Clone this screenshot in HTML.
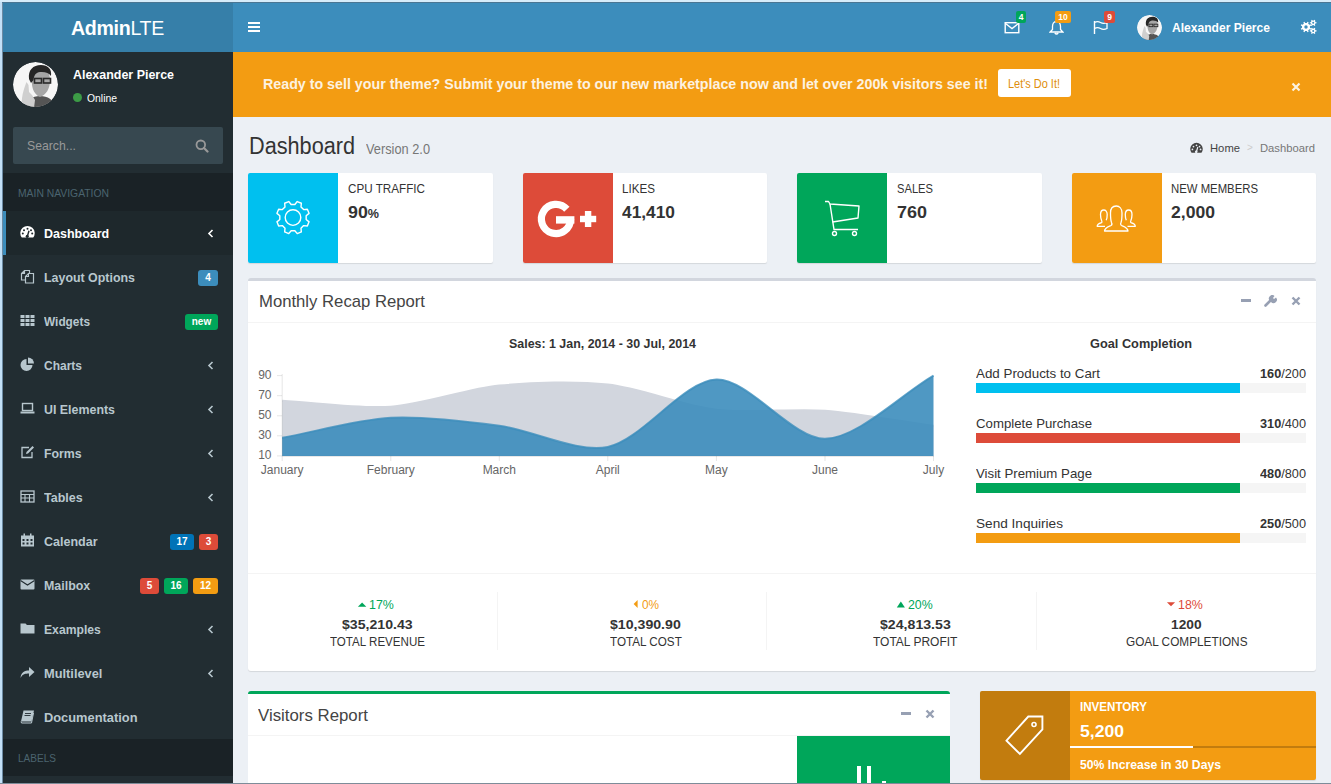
<!DOCTYPE html>
<html><head><meta charset="utf-8">
<style>
*{box-sizing:border-box;margin:0;padding:0}
html,body{width:1331px;height:784px;overflow:hidden}
body{position:relative;background:#ecf0f5;font-family:"Liberation Sans",sans-serif;color:#333;font-size:13px}
.a{position:absolute}
.t{position:absolute;white-space:nowrap;line-height:1;transform-origin:0 0}
.frameL{left:0;top:0;width:2px;height:784px;background:#c3e0f7}
.frameL2{left:2px;top:0;width:1px;height:784px;background:#6c8aa3}
.frameT{left:0;top:0;width:1331px;height:2px;background:#d6ecfa}
.frameT2{left:2px;top:2px;width:1329px;height:1px;background:#4a7693}
.frameB{left:0;top:783px;width:1331px;height:1px;background:#7d8c99}
.logo{left:3px;top:2px;width:230px;height:50px;background:#367fa9}
.navbar{left:233px;top:2px;width:1098px;height:50px;background:#3c8dbc}
.sidebar{left:3px;top:52px;width:230px;height:731px;background:#222d32}
.badge{position:absolute;height:12px;border-radius:2px;color:#fff;font-weight:bold;font-size:8.5px;line-height:12px;text-align:center;padding:0 2px}
.menu{position:absolute;left:3px;width:230px;height:44px;color:#b8c7ce}
.menu .lbl{position:absolute;left:41px;top:15px;font-size:13px;font-weight:bold;letter-spacing:0.1px;line-height:14px}
.menu .ic{position:absolute;left:17px;top:15px;width:14px;height:14px}
.menu .arr{position:absolute;left:204px;top:16px;width:8px;height:12px}
.lab{position:absolute;height:16px;border-radius:3px;color:#fff;font-weight:bold;font-size:10px;line-height:16px;text-align:center;top:14px}
</style></head><body>
<!-- HEADER -->
<div class="a logo"></div>
<div class="t" style="left:71px;top:18px;font-size:20px;color:#fff;letter-spacing:-0.3px;transform:scaleX(0.9788)"><b>Admin</b>LTE</div>
<div class="a navbar"></div>
<!-- hamburger -->
<div class="a" style="left:248px;top:22px;width:12px;height:2px;background:#fff"></div>
<div class="a" style="left:248px;top:26px;width:12px;height:2px;background:#fff"></div>
<div class="a" style="left:248px;top:30px;width:12px;height:2px;background:#fff"></div>
<!-- envelope -->
<svg class="a" style="left:1004px;top:21px" width="16" height="13" viewBox="0 0 16 13"><rect x="1.2" y="1.7" width="13.6" height="10" fill="none" stroke="#fff" stroke-width="1.4"/><path d="M1.2 2.2 L8 7.5 L14.8 2.2" fill="none" stroke="#fff" stroke-width="1.4"/></svg>
<div class="badge" style="left:1016px;top:11px;width:10px;background:#00a65a">4</div>
<!-- bell -->
<svg class="a" style="left:1049px;top:20px" width="15" height="15" viewBox="0 0 15 15"><path d="M7.5 1.5 C4.5 1.5 3.5 4 3.5 6.5 L3.5 9.5 L1.2 12 L13.8 12 L11.5 9.5 L11.5 6.5 C11.5 4 10.5 1.5 7.5 1.5 Z" fill="none" stroke="#fff" stroke-width="1.3"/><path d="M5.8 13 Q7.5 15 9.2 13" fill="none" stroke="#fff" stroke-width="1.4"/></svg>
<div class="badge" style="left:1055px;top:11px;width:16px;background:#f39c12">10</div>
<!-- flag -->
<svg class="a" style="left:1093px;top:20px" width="16" height="15" viewBox="0 0 16 15"><path d="M1.5 1 L1.5 14" stroke="#fff" stroke-width="1.4"/><path d="M1.5 2.5 Q4.5 0.8 7.5 2.5 Q10.5 4.2 14 2.5 L14 8.5 Q10.5 10.2 7.5 8.5 Q4.5 6.8 1.5 8.5" fill="none" stroke="#fff" stroke-width="1.3"/></svg>
<div class="badge" style="left:1104px;top:11px;width:11px;background:#dd4b39">9</div>
<!-- user -->
<svg class="a" style="left:1137px;top:15px" width="25" height="25" viewBox="0 0 45 45"><defs><clipPath id="avc2"><circle cx="22.5" cy="22.5" r="22.5"/></clipPath></defs><g clip-path="url(#avc2)"><circle cx="22.5" cy="22.5" r="22.5" fill="#f6f6f6"/>
<path d="M12 46 C13 38 19 34 27 34 C35 34 41 38 43 46 Z" fill="#555"/>
<path d="M19 14 C18 24 20 32 27 35 C33 33 37 27 37 18 C37 10 33 6 27 6 C22 6 19 9 19 14 Z" fill="#a6a6a6"/>
<path d="M16 17 C15 8 20 3 28 3 C35 3 39 7 38 14 C36 11 32 9.5 27 10 C23 10.5 21 13 20.5 18 L18 21 Z" fill="#262626"/>
<rect x="21.5" y="16.5" width="7" height="4.5" fill="none" stroke="#2a2a2a" stroke-width="1.6"/><rect x="30.5" y="16.5" width="7" height="4.5" fill="none" stroke="#2a2a2a" stroke-width="1.6"/>
<path d="M9 45 C8 37 10 30 12 24 L13.5 20 L15.5 23 L16 30 L19 33 L22 38 L21 46 Z" fill="#cfcfcf"/></g></svg>
<div class="t" style="left:1172px;top:21px;font-size:13px;color:#fff;font-weight:bold;transform:scaleX(0.9288)">Alexander Pierce</div>
<!-- gears -->
<svg class="a" style="left:1300px;top:19px" width="17" height="16" viewBox="0 0 17 16"><path d="M10.00 8.00 L9.90 8.87 L11.20 9.47 L10.71 10.64 L9.38 10.14 L8.83 10.83 L8.14 11.38 L8.64 12.71 L7.47 13.20 L6.87 11.90 L6.00 12.00 L5.13 11.90 L4.53 13.20 L3.36 12.71 L3.86 11.38 L3.17 10.83 L2.62 10.14 L1.29 10.64 L0.80 9.47 L2.10 8.87 L2.00 8.00 L2.10 7.13 L0.80 6.53 L1.29 5.36 L2.62 5.86 L3.17 5.17 L3.86 4.62 L3.36 3.29 L4.53 2.80 L5.13 4.10 L6.00 4.00 L6.87 4.10 L7.47 2.80 L8.64 3.29 L8.14 4.62 L8.83 5.17 L9.38 5.86 L10.71 5.36 L11.20 6.53 L9.90 7.13 Z M7.70 8.00 A1.7 1.7 0 1 0 4.30 8.00 A1.7 1.7 0 1 0 7.70 8.00 Z M15.28 2.60 L15.54 3.25 L16.56 3.27 L16.56 4.33 L15.54 4.35 L15.28 5.00 L14.84 5.55 L15.34 6.44 L14.42 6.97 L13.89 6.10 L13.20 6.20 L12.51 6.10 L11.98 6.97 L11.06 6.44 L11.56 5.55 L11.12 5.00 L10.86 4.35 L9.84 4.33 L9.84 3.27 L10.86 3.25 L11.12 2.60 L11.56 2.05 L11.06 1.16 L11.98 0.63 L12.51 1.50 L13.20 1.40 L13.89 1.50 L14.42 0.63 L15.34 1.16 L14.84 2.05 Z M14.20 3.80 A1.0 1.0 0 1 0 12.20 3.80 A1.0 1.0 0 1 0 14.20 3.80 Z M15.28 10.70 L15.54 11.35 L16.56 11.37 L16.56 12.43 L15.54 12.45 L15.28 13.10 L14.84 13.65 L15.34 14.54 L14.42 15.07 L13.89 14.20 L13.20 14.30 L12.51 14.20 L11.98 15.07 L11.06 14.54 L11.56 13.65 L11.12 13.10 L10.86 12.45 L9.84 12.43 L9.84 11.37 L10.86 11.35 L11.12 10.70 L11.56 10.15 L11.06 9.26 L11.98 8.73 L12.51 9.60 L13.20 9.50 L13.89 9.60 L14.42 8.73 L15.34 9.26 L14.84 10.15 Z M14.20 11.90 A1.0 1.0 0 1 0 12.20 11.90 A1.0 1.0 0 1 0 14.20 11.90 Z" fill="#fff" fill-rule="evenodd"/></svg>

<!-- SIDEBAR -->
<div class="a sidebar"></div>
<svg class="a" style="left:13px;top:62px" width="45" height="45" viewBox="0 0 45 45"><defs><clipPath id="avc"><circle cx="22.5" cy="22.5" r="22.5"/></clipPath></defs><g clip-path="url(#avc)"><circle cx="22.5" cy="22.5" r="22.5" fill="#f6f6f6"/>
<path d="M12 46 C13 38 19 34 27 34 C35 34 41 38 43 46 Z" fill="#555"/>
<path d="M19 14 C18 24 20 32 27 35 C33 33 37 27 37 18 C37 10 33 6 27 6 C22 6 19 9 19 14 Z" fill="#a6a6a6"/>
<path d="M16 17 C15 8 20 3 28 3 C35 3 39 7 38 14 C36 11 32 9.5 27 10 C23 10.5 21 13 20.5 18 L18 21 Z" fill="#262626"/>
<rect x="21.5" y="16.5" width="7" height="4.5" fill="none" stroke="#2a2a2a" stroke-width="1.6"/><rect x="30.5" y="16.5" width="7" height="4.5" fill="none" stroke="#2a2a2a" stroke-width="1.6"/>
<path d="M9 45 C8 37 10 30 12 24 L13.5 20 L15.5 23 L16 30 L19 33 L22 38 L21 46 Z" fill="#cfcfcf"/></g></svg>
<div class="t" style="left:73px;top:67.5px;font-size:13px;color:#fff;font-weight:bold;transform:scaleX(0.9572)">Alexander Pierce</div>
<div class="a" style="left:73px;top:93px;width:9px;height:9px;border-radius:50%;background:#3c9b46"></div>
<div class="t" style="left:87px;top:93px;font-size:11px;color:#fff;transform:scaleX(0.9435)">Online</div>
<!-- search -->
<div class="a" style="left:13px;top:127px;width:210px;height:37px;background:#374850;border-radius:2px"></div>
<div class="t" style="left:27px;top:139px;font-size:13px;color:#999;transform:scaleX(0.9417)">Search...</div>
<svg class="a" style="left:195px;top:139px" width="14" height="14" viewBox="0 0 14 14"><circle cx="5.8" cy="5.8" r="4.3" fill="none" stroke="#999" stroke-width="1.8"/><path d="M9 9 L12.5 12.5" stroke="#999" stroke-width="2.2" stroke-linecap="round"/></svg>
<!-- header -->
<div class="a" style="left:3px;top:173px;width:230px;height:38px;background:#1a2226"></div>
<div class="t" style="left:18px;top:188px;font-size:11.5px;color:#4b646f;transform:scaleX(0.8995)">MAIN NAVIGATION</div>

<div class="a" style="left:3px;top:211px;width:230px;height:44px;background:#1e282c"></div>
<div class="a" style="left:3px;top:211px;width:3px;height:44px;background:#3c8dbc"></div>
<svg class="a" style="left:20px;top:225px" width="15" height="15" viewBox="0 0 15 15"><path d="M1.8 12.5 A7.2 7.2 0 1 1 13.2 12.5 Z" fill="#fff"/><circle cx="7.5" cy="3.8" r="1" fill="#1e282c"/><circle cx="4" cy="5.3" r="1" fill="#1e282c"/><circle cx="11" cy="5.3" r="1" fill="#1e282c"/><circle cx="2.8" cy="8.6" r="1" fill="#1e282c"/><circle cx="12.2" cy="8.6" r="1" fill="#1e282c"/><path d="M7 12.5 L9 5.8" stroke="#1e282c" stroke-width="1.4"/><circle cx="7.2" cy="11.3" r="1.5" fill="#1e282c"/></svg>
<div class="t" style="left:44px;top:227px;font-size:13px;font-weight:bold;color:#fff;transform:scaleX(0.9601)">Dashboard</div>
<svg class="a" style="left:207px;top:229px" width="7" height="9" viewBox="0 0 7 9"><path d="M5.5 1 L2 4.5 L5.5 8" fill="none" stroke="#fff" stroke-width="1.6"/></svg>
<svg class="a" style="left:20px;top:269px" width="15" height="15" viewBox="0 0 15 15"><path d="M1.5 4.5 L4.5 1.5 L9.5 1.5 L9.5 11 L1.5 11 Z M1.5 4.5 L4.5 4.5 L4.5 1.5" fill="none" stroke="#b8c7ce" stroke-width="1.2"/><path d="M5.5 7.5 L8.5 4.5 L13.5 4.5 L13.5 14 L5.5 14 Z" fill="#222d32" stroke="#b8c7ce" stroke-width="1.2"/><path d="M5.5 7.5 L8.5 7.5 L8.5 4.5" fill="none" stroke="#b8c7ce" stroke-width="1.1"/></svg>
<div class="t" style="left:44px;top:271px;font-size:13px;font-weight:bold;color:#b8c7ce;transform:scaleX(0.9544)">Layout Options</div>
<div class="lab" style="left:198px;top:270px;width:20px;background:#3c8dbc">4</div>
<svg class="a" style="left:20px;top:313px" width="15" height="15" viewBox="0 0 15 15"><g fill="#b8c7ce"><rect x="0.5" y="2" width="4" height="3"/><rect x="5.5" y="2" width="4" height="3"/><rect x="10.5" y="2" width="4" height="3"/><rect x="0.5" y="6" width="4" height="3"/><rect x="5.5" y="6" width="4" height="3"/><rect x="10.5" y="6" width="4" height="3"/><rect x="0.5" y="10" width="4" height="3"/><rect x="5.5" y="10" width="4" height="3"/><rect x="10.5" y="10" width="4" height="3"/></g></svg>
<div class="t" style="left:44px;top:315px;font-size:13px;font-weight:bold;color:#b8c7ce;transform:scaleX(0.9117)">Widgets</div>
<div class="lab" style="left:185px;top:314px;width:33px;background:#00a65a">new</div>
<svg class="a" style="left:20px;top:357px" width="15" height="15" viewBox="0 0 15 15"><path d="M6.5 2 A6 6 0 1 0 12.5 8 L6.5 8 Z" fill="#b8c7ce"/><path d="M8 0.5 A6 6 0 0 1 14 6.5 L8 6.5 Z" fill="#b8c7ce"/></svg>
<div class="t" style="left:44px;top:359px;font-size:13px;font-weight:bold;color:#b8c7ce;transform:scaleX(0.9226)">Charts</div>
<svg class="a" style="left:207px;top:361px" width="7" height="9" viewBox="0 0 7 9"><path d="M5.5 1 L2 4.5 L5.5 8" fill="none" stroke="#b8c7ce" stroke-width="1.6"/></svg>
<svg class="a" style="left:20px;top:401px" width="15" height="15" viewBox="0 0 15 15"><rect x="2.5" y="2.5" width="10" height="7" fill="none" stroke="#b8c7ce" stroke-width="1.4"/><rect x="0.5" y="10.5" width="14" height="2" fill="#b8c7ce"/></svg>
<div class="t" style="left:44px;top:403px;font-size:13px;font-weight:bold;color:#b8c7ce;transform:scaleX(0.9540)">UI Elements</div>
<svg class="a" style="left:207px;top:405px" width="7" height="9" viewBox="0 0 7 9"><path d="M5.5 1 L2 4.5 L5.5 8" fill="none" stroke="#b8c7ce" stroke-width="1.6"/></svg>
<svg class="a" style="left:20px;top:445px" width="15" height="15" viewBox="0 0 15 15"><path d="M9 2.5 L2 2.5 L2 12.5 L12 12.5 L12 7" fill="none" stroke="#b8c7ce" stroke-width="1.3"/><path d="M6 9 L6.5 7 L12.5 1 L14 2.5 L8 8.5 Z" fill="#b8c7ce"/></svg>
<div class="t" style="left:44px;top:447px;font-size:13px;font-weight:bold;color:#b8c7ce;transform:scaleX(0.9488)">Forms</div>
<svg class="a" style="left:207px;top:449px" width="7" height="9" viewBox="0 0 7 9"><path d="M5.5 1 L2 4.5 L5.5 8" fill="none" stroke="#b8c7ce" stroke-width="1.6"/></svg>
<svg class="a" style="left:20px;top:489px" width="15" height="15" viewBox="0 0 15 15"><rect x="1" y="2" width="13" height="11" fill="none" stroke="#b8c7ce" stroke-width="1.3"/><path d="M1 5.5 H14 M1 9 H14 M5 5.5 V13 M9.5 5.5 V13" stroke="#b8c7ce" stroke-width="1.1"/></svg>
<div class="t" style="left:44px;top:491px;font-size:13px;font-weight:bold;color:#b8c7ce;transform:scaleX(0.9598)">Tables</div>
<svg class="a" style="left:207px;top:493px" width="7" height="9" viewBox="0 0 7 9"><path d="M5.5 1 L2 4.5 L5.5 8" fill="none" stroke="#b8c7ce" stroke-width="1.6"/></svg>
<svg class="a" style="left:20px;top:533px" width="15" height="15" viewBox="0 0 15 15"><rect x="1" y="2.5" width="13" height="11" fill="#b8c7ce"/><g fill="#222d32"><rect x="2.5" y="6" width="2" height="2"/><rect x="6.5" y="6" width="2" height="2"/><rect x="10.5" y="6" width="2" height="2"/><rect x="2.5" y="9.5" width="2" height="2"/><rect x="6.5" y="9.5" width="2" height="2"/><rect x="10.5" y="9.5" width="2" height="2"/></g><rect x="3.5" y="0.5" width="1.5" height="3" fill="#b8c7ce"/><rect x="10" y="0.5" width="1.5" height="3" fill="#b8c7ce"/></svg>
<div class="t" style="left:44px;top:535px;font-size:13px;font-weight:bold;color:#b8c7ce;transform:scaleX(0.9633)">Calendar</div>
<div class="lab" style="left:170px;top:534px;width:24px;background:#0073b7">17</div>
<div class="lab" style="left:199px;top:534px;width:19px;background:#dd4b39">3</div>
<svg class="a" style="left:20px;top:577px" width="15" height="15" viewBox="0 0 15 15"><rect x="0.5" y="2.5" width="14" height="10" rx="1" fill="#b8c7ce"/><path d="M0.5 3.5 L7.5 8 L14.5 3.5" fill="none" stroke="#222d32" stroke-width="1.1"/></svg>
<div class="t" style="left:44px;top:579px;font-size:13px;font-weight:bold;color:#b8c7ce;transform:scaleX(0.9565)">Mailbox</div>
<div class="lab" style="left:140px;top:578px;width:19px;background:#dd4b39">5</div>
<div class="lab" style="left:164px;top:578px;width:24px;background:#00a65a">16</div>
<div class="lab" style="left:193px;top:578px;width:25px;background:#f39c12">12</div>
<svg class="a" style="left:20px;top:621px" width="15" height="15" viewBox="0 0 15 15"><path d="M0.5 2.5 L5.5 2.5 L7 4 L14.5 4 L14.5 12.5 L0.5 12.5 Z" fill="#b8c7ce"/></svg>
<div class="t" style="left:44px;top:623px;font-size:13px;font-weight:bold;color:#b8c7ce;transform:scaleX(0.9357)">Examples</div>
<svg class="a" style="left:207px;top:625px" width="7" height="9" viewBox="0 0 7 9"><path d="M5.5 1 L2 4.5 L5.5 8" fill="none" stroke="#b8c7ce" stroke-width="1.6"/></svg>
<svg class="a" style="left:20px;top:665px" width="15" height="15" viewBox="0 0 15 15"><path d="M0.5 13 C1 7 5 5.5 9 5.5 L9 2 L14.5 7 L9 12 L9 8.5 C5.5 8.5 2.5 9 0.5 13 Z" fill="#b8c7ce"/></svg>
<div class="t" style="left:44px;top:667px;font-size:13px;font-weight:bold;color:#b8c7ce;transform:scaleX(0.9857)">Multilevel</div>
<svg class="a" style="left:207px;top:669px" width="7" height="9" viewBox="0 0 7 9"><path d="M5.5 1 L2 4.5 L5.5 8" fill="none" stroke="#b8c7ce" stroke-width="1.6"/></svg>
<svg class="a" style="left:20px;top:709px" width="15" height="15" viewBox="0 0 15 15"><path d="M3.5 1.5 L14 1.5 L11.5 12.5 L1 12.5 Z" fill="#b8c7ce"/><path d="M1 12.5 L1.5 14 L11.5 14 L13.5 4" fill="none" stroke="#b8c7ce" stroke-width="1"/><path d="M5 4.5 H11 M4.5 6.5 H10.5" stroke="#222d32" stroke-width="0.9"/></svg>
<div class="t" style="left:44px;top:711px;font-size:13px;font-weight:bold;color:#b8c7ce;transform:scaleX(0.9881)">Documentation</div>
<div class="a" style="left:3px;top:739px;width:230px;height:37px;background:#1a2226"></div>
<div class="t" style="left:18px;top:752.5px;font-size:11.5px;color:#4b646f;transform:scaleX(0.8739)">LABELS</div>

<!-- ALERT -->
<div class="a" style="left:233px;top:52px;width:1098px;height:65px;background:#f39c12"></div>
<div class="t" style="left:263px;top:75.5px;font-size:15px;font-weight:bold;color:#fdf2e0;transform:scaleX(0.9495)">Ready to sell your theme? Submit your theme to our new marketplace now and let over 200k visitors see it!</div>
<div class="a" style="left:998px;top:69px;width:73px;height:28px;background:#fff;border-radius:3px"></div>
<div class="t" style="left:1008px;top:78px;font-size:12px;color:#e08e0b;transform:scaleX(0.9125)">Let's Do It!</div>
<svg class="a" style="left:1291px;top:82px" width="10" height="10" viewBox="0 0 10 10"><path d="M1.5 1.5 L8.5 8.5 M8.5 1.5 L1.5 8.5" stroke="#fdf2e0" stroke-width="2.2"/></svg>

<!-- CONTENT HEADER -->
<div class="t" style="left:249px;top:135px;font-size:23px;color:#333;transform:scaleX(0.9420)">Dashboard</div>
<div class="t" style="left:366px;top:142px;font-size:14px;color:#777;transform:scaleX(0.9135)">Version 2.0</div>
<svg class="a" style="left:1189.5px;top:142px" width="13" height="13" viewBox="0 0 15 15"><path d="M1.8 12.5 A7.2 7.2 0 1 1 13.2 12.5 Z" fill="#444"/><circle cx="7.5" cy="3.8" r="1" fill="#ecf0f5"/><circle cx="4" cy="5.3" r="1" fill="#ecf0f5"/><circle cx="11" cy="5.3" r="1" fill="#ecf0f5"/><circle cx="2.8" cy="8.6" r="1" fill="#ecf0f5"/><circle cx="12.2" cy="8.6" r="1" fill="#ecf0f5"/><path d="M7 12.5 L9 5.8" stroke="#ecf0f5" stroke-width="1.4"/><circle cx="7.2" cy="11.3" r="1.5" fill="#ecf0f5"/></svg>
<div class="t" style="left:1210px;top:143px;font-size:11px;color:#444;transform:scaleX(1.0224)">Home</div>
<div class="t" style="left:1247px;top:143px;font-size:10px;color:#ccc">&gt;</div>
<div class="t" style="left:1260px;top:143px;font-size:11px;color:#777;transform:scaleX(1.0218)">Dashboard</div>

<!-- INFO BOXES -->
<div class="a" style="left:248px;top:173px;width:245px;height:90px;background:#fff;box-shadow:0 1px 1px rgba(0,0,0,0.1);border-radius:2px"></div>
<div class="a" style="left:248px;top:173px;width:90px;height:90px;background:#00c0ef;border-radius:2px 0 0 2px"></div>
<div class="a" style="left:523px;top:173px;width:244px;height:90px;background:#fff;box-shadow:0 1px 1px rgba(0,0,0,0.1);border-radius:2px"></div>
<div class="a" style="left:523px;top:173px;width:90px;height:90px;background:#dd4b39;border-radius:2px 0 0 2px"></div>
<div class="a" style="left:797px;top:173px;width:245px;height:90px;background:#fff;box-shadow:0 1px 1px rgba(0,0,0,0.1);border-radius:2px"></div>
<div class="a" style="left:797px;top:173px;width:90px;height:90px;background:#00a65a;border-radius:2px 0 0 2px"></div>
<div class="a" style="left:1072px;top:173px;width:244px;height:90px;background:#fff;box-shadow:0 1px 1px rgba(0,0,0,0.1);border-radius:2px"></div>
<div class="a" style="left:1072px;top:173px;width:90px;height:90px;background:#f39c12;border-radius:2px 0 0 2px"></div>

<div class="t" style="left:348px;top:182px;font-size:13px;color:#333;transform:scaleX(0.8983)">CPU TRAFFIC</div>
<div class="t" style="left:348px;top:204px;font-size:17px;color:#333;font-weight:bold;transform:scaleX(1.0475)">90<span style="font-size:12px">%</span></div>
<div class="t" style="left:622px;top:182px;font-size:13px;color:#333;transform:scaleX(0.8953)">LIKES</div>
<div class="t" style="left:622px;top:204px;font-size:17px;color:#333;font-weight:bold;transform:scaleX(1.0192)">41,410</div>
<div class="t" style="left:897px;top:182px;font-size:13px;color:#333;transform:scaleX(0.8587)">SALES</div>
<div class="t" style="left:897px;top:204px;font-size:17px;color:#333;font-weight:bold;transform:scaleX(1.0573)">760</div>
<div class="t" style="left:1171px;top:182px;font-size:13px;color:#333;transform:scaleX(0.8729)">NEW MEMBERS</div>
<div class="t" style="left:1171px;top:204px;font-size:17px;color:#333;font-weight:bold;transform:scaleX(1.0342)">2,000</div>
<svg class="a" style="left:0;top:0" width="1331" height="784"><path d="M294.87 204.43 L297.25 201.55 L301.34 203.25 L300.99 206.96 L303.64 209.61 L307.35 209.26 L309.05 213.35 L306.17 215.73 L306.17 219.47 L309.05 221.85 L307.35 225.94 L303.64 225.59 L300.99 228.24 L301.34 231.95 L297.25 233.65 L294.87 230.77 L291.13 230.77 L288.75 233.65 L284.66 231.95 L285.01 228.24 L282.36 225.59 L278.65 225.94 L276.95 221.85 L279.83 219.47 L279.83 215.73 L276.95 213.35 L278.65 209.26 L282.36 209.61 L285.01 206.96 L284.66 203.25 L288.75 201.55 L291.13 204.43 Z" fill="none" stroke="#fff" stroke-width="1.4" stroke-linejoin="round"/><circle cx="293.0" cy="217.6" r="7.8" fill="none" stroke="#fff" stroke-width="1.4"/></svg>
<!-- G+ -->
<svg class="a" style="left:0;top:0" width="1331" height="784"><path d="M566.85 209.23 A14.6 14.6 0 1 0 570.60 219" fill="none" stroke="#fff" stroke-width="7.2"/><rect x="556" y="216.2" width="18.4" height="7.4" fill="#fff"/><rect x="580" y="215.8" width="16.2" height="6.4" fill="#fff"/><rect x="584.9" y="211" width="6.4" height="16" fill="#fff"/></svg>
<!-- cart -->
<svg class="a" style="left:823px;top:199px" width="40" height="40" viewBox="0 0 40 40"><path d="M2 2.5 L5.5 2.5 L7 5 L36 7 L35 19 L9.5 23" fill="none" stroke="#fff" stroke-width="1.4" stroke-linejoin="round"/><path d="M7 5 L11 30.5 L35 30.5" fill="none" stroke="#fff" stroke-width="1.4"/><circle cx="11.5" cy="34.5" r="2" fill="none" stroke="#fff" stroke-width="1.4"/><circle cx="31.5" cy="34.5" r="2" fill="none" stroke="#fff" stroke-width="1.4"/></svg>
<!-- people -->
<svg class="a" style="left:1095px;top:204px" width="44" height="30" viewBox="0 0 44 30"><g fill="none" stroke="#fff" stroke-width="1.3" stroke-linejoin="round"><path d="M9.5 27 L33 27 C33 24 30 23 26.5 21.5 C25.5 21 25.5 19.5 26 18.5 C26.8 16.5 27 13 27 9 C27 4.5 24.5 2 21.25 2 C18 2 15.5 4.5 15.5 9 C15.5 13 15.7 16.5 16.5 18.5 C17 19.5 17 21 16 21.5 C12.5 23 9.5 24 9.5 27 Z"/><path d="M10 22.3 L2.2 22.3 C2.2 20.5 4 19.5 6.5 18.7 C7 18.4 7 17.5 6.7 16.8 C6 15 5.5 13 5.5 10.5 C5.5 7.5 7 6 8.8 6 C10.6 6 12.2 7.5 12.2 10.5 C12.2 13 11.8 15 11.2 16.3"/><path d="M 32.50 22.30 L 40.30 22.30 C 40.30 20.50 38.50 19.50 36.00 18.70 C 35.50 18.40 35.50 17.50 35.80 16.80 C 36.50 15.00 37.00 13.00 37.00 10.50 C 37.00 7.50 35.50 6.00 33.70 6.00 C 31.90 6.00 30.30 7.50 30.30 10.50 C 30.30 13.00 30.70 15.00 31.30 16.30"/></g></svg>

<!-- MONTHLY RECAP BOX -->
<div class="a" style="left:248px;top:278px;width:1068px;height:393px;background:#fff;border-top:3px solid #d2d6de;border-radius:3px;box-shadow:0 1px 1px rgba(0,0,0,0.1)"></div>
<div class="t" style="left:259px;top:293px;font-size:17px;color:#444;transform:scaleX(0.9814)">Monthly Recap Report</div>
<div class="a" style="left:248px;top:322px;width:1068px;height:1px;background:#f4f4f4"></div>
<div class="a" style="left:1241px;top:299px;width:10px;height:3px;background:#97a0b3"></div>
<svg class="a" style="left:1264px;top:295px" width="13" height="12" viewBox="0 0 13 12"><path d="M1.5 10.5 L7 5" stroke="#97a0b3" stroke-width="2.6" stroke-linecap="round"/><path d="M6 6 A3.2 3.2 0 0 1 10.5 1 L9 3 L10 4 L12 2.5 A3.2 3.2 0 0 1 7 7 Z" fill="#97a0b3"/></svg>
<svg class="a" style="left:1291px;top:296px" width="10" height="10" viewBox="0 0 10 10"><path d="M1.5 1.5 L8.5 8.5 M8.5 1.5 L1.5 8.5" stroke="#97a0b3" stroke-width="2.4"/></svg>

<div class="t" style="left:509px;top:336.5px;font-size:13px;font-weight:bold;color:#333;transform:scaleX(0.9548)">Sales: 1 Jan, 2014 - 30 Jul, 2014</div>
<!-- chart -->
<svg class="a" style="left:0;top:0" width="1331" height="784" viewBox="0 0 1331 784">
<path stroke="none" d="M282.2 400.7 C314.8 402.5 358.5 409.0 390.8 406.7 C423.6 404.4 466.4 389.0 499.3 385.6 C531.6 382.4 575.7 381.1 607.8 384.6 C640.8 388.3 683.4 405.8 716.4 409.7 C748.5 413.6 792.5 408.3 825.0 410.7 C857.7 413.2 900.9 421.3 933.5 425.8 L933.5 455.9 L282.2 455.9 Z" fill="rgb(210,214,222)"/>
<path d="M282.2 400.7 C314.8 402.5 358.5 409.0 390.8 406.7 C423.6 404.4 466.4 389.0 499.3 385.6 C531.6 382.4 575.7 381.1 607.8 384.6 C640.8 388.3 683.4 405.8 716.4 409.7 C748.5 413.6 792.5 408.3 825.0 410.7 C857.7 413.2 900.9 421.3 933.5 425.8" fill="none" stroke="rgb(210,214,222)" stroke-width="2"/>
<path d="M282.2 437.8 C314.8 431.8 358.0 419.6 390.8 417.8 C423.1 416.0 467.0 421.5 499.3 425.8 C532.1 430.2 577.6 453.3 607.8 446.9 C642.8 439.4 683.3 380.8 716.4 379.6 C748.4 378.4 792.6 439.4 825.0 438.8 C857.8 438.2 900.9 394.6 933.5 375.6 L933.5 455.9 L282.2 455.9 Z" fill="rgba(60,141,188,0.9)"/>
<path d="M282.2 437.8 C314.8 431.8 358.0 419.6 390.8 417.8 C423.1 416.0 467.0 421.5 499.3 425.8 C532.1 430.2 577.6 453.3 607.8 446.9 C642.8 439.4 683.3 380.8 716.4 379.6 C748.4 378.4 792.6 439.4 825.0 438.8 C857.8 438.2 900.9 394.6 933.5 375.6" fill="none" stroke="rgba(60,141,188,0.8)" stroke-width="2"/>
<path d="M282.2 374 V456" stroke="rgba(0,0,0,0.1)" stroke-width="1"/>
<path d="M282 456.4 H934" stroke="rgba(0,0,0,0.1)" stroke-width="1"/>
<g stroke="rgba(0,0,0,0.1)" stroke-width="1">
<path d="M277 375.6 H282 M277 395.7 H282 M277 415.8 H282 M277 435.8 H282 M277 455.9 H282"/>
<path d="M282.2 456 V461 M390.8 456 V461 M499.3 456 V461 M607.8 456 V461 M716.4 456 V461 M825 456 V461 M933.5 456 V461"/>
</g>
<g font-family="Liberation Sans" font-size="12" fill="#666" text-anchor="end">
<text x="271.5" y="378.8">90</text><text x="271.5" y="398.9">70</text><text x="271.5" y="419">50</text><text x="271.5" y="439">30</text><text x="271.5" y="459">10</text>
</g>
<g font-family="Liberation Sans" font-size="12" fill="#666" text-anchor="middle">
<text x="282.2" y="473.5">January</text><text x="390.8" y="473.5">February</text><text x="499.3" y="473.5">March</text><text x="607.8" y="473.5">April</text><text x="716.4" y="473.5">May</text><text x="825" y="473.5">June</text><text x="933.5" y="473.5">July</text>
</g>
</svg>

<!-- goals -->
<div class="t" style="left:1090px;top:336.5px;font-size:13px;font-weight:bold;color:#333;transform:scaleX(0.9808)">Goal Completion</div>
<div class="t" style="left:976px;top:366.5px;font-size:13px;color:#333;transform:scaleX(1.0276)">Add Products to Cart</div>
<div class="t" style="right:25px;top:366.5px;font-size:13px;color:#333;transform:scaleX(0.9784);transform-origin:100% 0"><b>160</b>/200</div>
<div class="a" style="left:976px;top:383px;width:330px;height:10px;background:#f5f5f5"></div>
<div class="a" style="left:976px;top:383px;width:264px;height:10px;background:#00c0ef"></div>
<div class="t" style="left:976px;top:416.5px;font-size:13px;color:#333;transform:scaleX(1.0160)">Complete Purchase</div>
<div class="t" style="right:25px;top:416.5px;font-size:13px;color:#333;transform:scaleX(0.9784);transform-origin:100% 0"><b>310</b>/400</div>
<div class="a" style="left:976px;top:433px;width:330px;height:10px;background:#f5f5f5"></div>
<div class="a" style="left:976px;top:433px;width:264px;height:10px;background:#dd4b39"></div>
<div class="t" style="left:976px;top:466.5px;font-size:13px;color:#333;transform:scaleX(1.0182)">Visit Premium Page</div>
<div class="t" style="right:25px;top:466.5px;font-size:13px;color:#333;transform:scaleX(0.9784);transform-origin:100% 0"><b>480</b>/800</div>
<div class="a" style="left:976px;top:483px;width:330px;height:10px;background:#f5f5f5"></div>
<div class="a" style="left:976px;top:483px;width:264px;height:10px;background:#00a65a"></div>
<div class="t" style="left:976px;top:516.5px;font-size:13px;color:#333;transform:scaleX(1.0466)">Send Inquiries</div>
<div class="t" style="right:25px;top:516.5px;font-size:13px;color:#333;transform:scaleX(0.9784);transform-origin:100% 0"><b>250</b>/500</div>
<div class="a" style="left:976px;top:533px;width:330px;height:10px;background:#f5f5f5"></div>
<div class="a" style="left:976px;top:533px;width:264px;height:10px;background:#f39c12"></div>
<!-- footer -->
<div class="a" style="left:248px;top:573px;width:1068px;height:1px;background:#f4f4f4"></div>
<div class="a" style="left:497px;top:592px;width:1px;height:58px;background:#f4f4f4"></div>
<div class="a" style="left:766px;top:592px;width:1px;height:58px;background:#f4f4f4"></div>
<div class="a" style="left:1036px;top:592px;width:1px;height:58px;background:#f4f4f4"></div>
<svg class="a" style="left:0;top:0" width="1331" height="784"><path d="M357.9 606.8 L366.3 606.8 L362.1 602.6 Z" fill="#00a65a"/></svg>
<div class="t" style="left:369.3px;top:599px;font-size:12.5px;color:#00a65a;transform:scaleX(0.9908)">17%</div>
<div class="t" style="left:341.7px;top:618px;font-size:13px;font-weight:bold;color:#333;transform:scaleX(1.0848)">$35,210.43</div>
<div class="t" style="left:329.5px;top:636px;font-size:12.5px;color:#333;transform:scaleX(0.9261)">TOTAL REVENUE</div>
<svg class="a" style="left:0;top:0" width="1331" height="784"><path d="M637.6 600 L637.6 608 L633.6 604 Z" fill="#f39c12"/></svg>
<div class="t" style="left:641.8px;top:599px;font-size:12.5px;color:#f39c12;transform:scaleX(0.9459)">0%</div>
<div class="t" style="left:610.2px;top:618px;font-size:13px;font-weight:bold;color:#333;transform:scaleX(1.0879)">$10,390.90</div>
<div class="t" style="left:609.7px;top:636px;font-size:12.5px;color:#333;transform:scaleX(0.9340)">TOTAL COST</div>
<svg class="a" style="left:0;top:0" width="1331" height="784"><path d="M896.8 607.5 L904.9 607.5 L900.8499999999999 601.5 Z" fill="#00a65a"/></svg>
<div class="t" style="left:908.4px;top:599px;font-size:12.5px;color:#00a65a;transform:scaleX(0.9868)">20%</div>
<div class="t" style="left:880.2px;top:618px;font-size:13px;font-weight:bold;color:#333;transform:scaleX(1.0879)">$24,813.53</div>
<div class="t" style="left:873.4px;top:636px;font-size:12.5px;color:#333;transform:scaleX(0.9593)">TOTAL PROFIT</div>
<svg class="a" style="left:0;top:0" width="1331" height="784"><path d="M1166.9 602.2 L1175.1 602.2 L1171 606.3 Z" fill="#dd4b39"/></svg>
<div class="t" style="left:1178.2px;top:599px;font-size:12.5px;color:#dd4b39;transform:scaleX(0.9908)">18%</div>
<div class="t" style="left:1171.2px;top:618px;font-size:13px;font-weight:bold;color:#333;transform:scaleX(1.0580)">1200</div>
<div class="t" style="left:1125.8px;top:636px;font-size:12.5px;color:#333;transform:scaleX(0.9438)">GOAL COMPLETIONS</div>

<!-- VISITORS REPORT -->
<div class="a" style="left:248px;top:691px;width:702px;height:100px;background:#fff;border-top:3px solid #00a65a;border-radius:3px"></div>
<div class="t" style="left:258px;top:706.5px;font-size:17px;color:#444;transform:scaleX(0.9893)">Visitors Report</div>
<div class="a" style="left:248px;top:735px;width:702px;height:1px;background:#f4f4f4"></div>
<div class="a" style="left:901px;top:712px;width:10px;height:3px;background:#97a0b3"></div>
<svg class="a" style="left:925px;top:709px" width="10" height="10" viewBox="0 0 10 10"><path d="M1.5 1.5 L8.5 8.5 M8.5 1.5 L1.5 8.5" stroke="#97a0b3" stroke-width="2.4"/></svg>
<div class="a" style="left:797px;top:736px;width:153px;height:50px;background:#00a65a"></div>
<div class="a" style="left:857px;top:766px;width:4px;height:20px;background:#fff"></div>
<div class="a" style="left:867px;top:766px;width:4px;height:20px;background:#fff"></div>
<div class="a" style="left:882px;top:781px;width:4px;height:5px;background:#fff"></div>

<!-- INVENTORY -->
<div class="a" style="left:980px;top:691px;width:336px;height:89px;background:#f39c12;border-radius:2px;box-shadow:0 1px 1px rgba(0,0,0,0.1)"></div>
<div class="a" style="left:980px;top:691px;width:90px;height:89px;background:rgba(0,0,0,0.2);border-radius:2px 0 0 2px"></div>
<svg class="a" style="left:1000px;top:710px" width="50" height="50" viewBox="0 0 50 50"><path d="M6.5 30.6 L28.3 6.5 L42.4 6.5 L42.4 19.5 L19.9 44 Z" fill="none" stroke="#fff" stroke-width="1.9" stroke-linejoin="miter"/><circle cx="34" cy="14.5" r="2" fill="none" stroke="#fff" stroke-width="1.6"/></svg>
<div class="t" style="left:1080px;top:701px;font-size:12.5px;color:#fff;font-weight:bold;transform:scaleX(0.9273)">INVENTORY</div>
<div class="t" style="left:1080px;top:723px;font-size:17px;color:#fff;font-weight:bold;transform:scaleX(1.0342)">5,200</div>
<div class="a" style="left:1070px;top:746px;width:246px;height:2px;background:rgba(0,0,0,0.2)"></div>
<div class="a" style="left:1070px;top:746px;width:123px;height:2px;background:#fff"></div>
<div class="t" style="left:1080px;top:759px;font-size:12.5px;color:#fff;font-weight:bold;transform:scaleX(0.9755)">50% Increase in 30 Days</div>

<div class="a frameL"></div><div class="a frameL2"></div><div class="a frameT"></div><div class="a frameT2"></div><div class="a frameB"></div>
</body></html>
